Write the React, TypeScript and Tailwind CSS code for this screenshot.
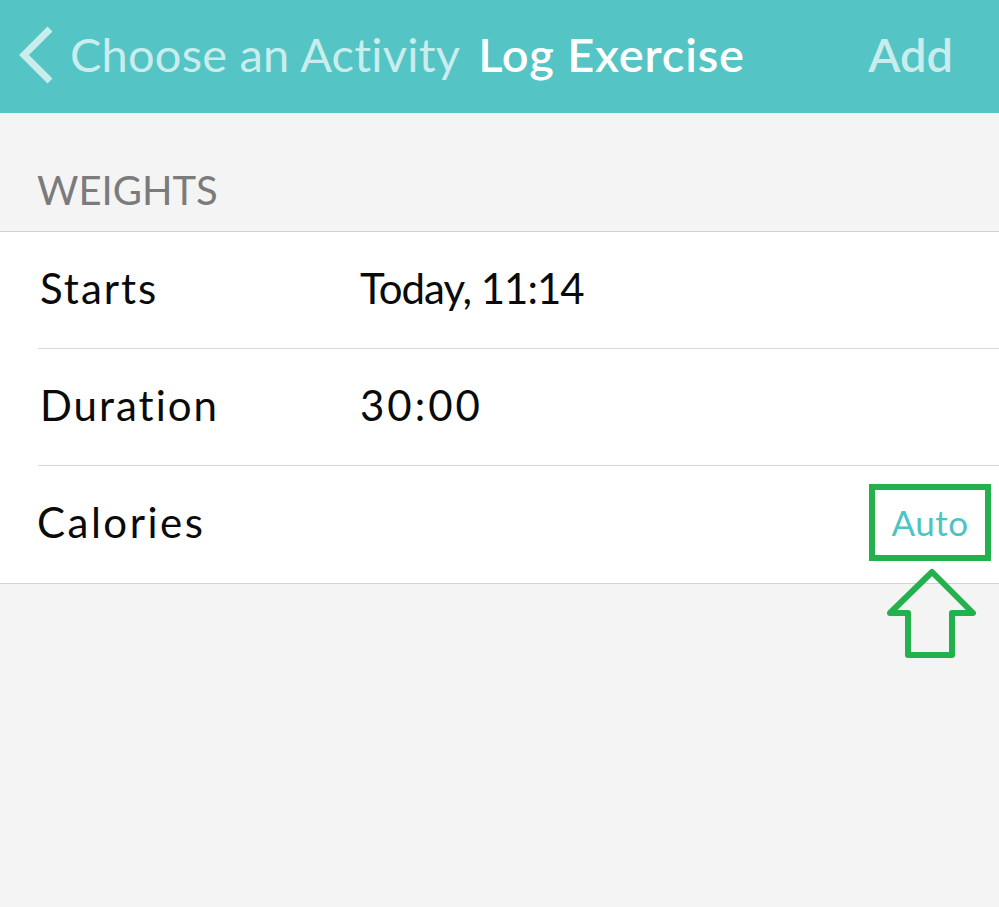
import React from 'react';

const rows = [
  { label: 'Starts', value: 'Today, 11:14', track: 'tracking-[-1px]' },
  { label: 'Duration', value: '30:00', track: 'tracking-[3px]' },
];

export default function App() {
  return (
    <div className="relative w-[999px] h-[907px] bg-[#f4f4f4] font-['Lato',sans-serif] overflow-hidden">
      {/* Nav bar */}
      <div className="h-[113px] bg-[#54c4c5] flex items-center">
        <svg width="40" height="60" viewBox="0 0 40 60" className="ml-[16px] mr-[14px] -mt-[4px]">
          <path d="M34 4 L8 30 L34 56" fill="none" stroke="#c9eded" strokeWidth="7" />
        </svg>
        <span className="text-[47px] text-[#c9eded] tracking-[0.2px] -mt-[4px]">Choose an Activity</span>
        <span className="text-[47px] text-white font-semibold tracking-[0.8px] ml-[18px] -mt-[4px]">Log Exercise</span>
        <span className="text-[47px] text-[#c9eded] font-semibold ml-auto mr-[46px] -mt-[4px]">Add</span>
      </div>

      {/* Section title */}
      <div className="h-[118px] flex items-end pl-[37px] pb-[21px]">
        <span className="text-[40px] text-[#7b7b7b] leading-none">WEIGHTS</span>
      </div>

      {/* Rows */}
      <div className="bg-white border-y border-[#d2d2d2]">
        {rows.map((r) => (
          <div key={r.label} className="pl-[38px]">
            <div className="h-[117px] flex items-center border-b border-[#d8d8d8] pb-[4px]">
              <span className="w-[322px] pl-[2px] text-[42px] text-[#0a0a0a] tracking-[2px]">{r.label}</span>
              <span className={`text-[42px] text-[#0a0a0a] ${r.track}`}>{r.value}</span>
            </div>
          </div>
        ))}
        <div className="h-[117px] flex items-center pl-[37px] pr-[8px]">
          <span className="text-[42px] text-[#0a0a0a] tracking-[2.5px] pb-[4px]">Calories</span>
          <div className="ml-auto w-[122px] h-[77px] -mt-[4px] border-[6px] border-[#22b14c] flex items-center justify-center">
            <span className="text-[35px] text-[#4fc3c3] tracking-[0.5px]">Auto</span>
          </div>
        </div>
      </div>

      {/* Arrow annotation pointing at Auto */}
      <svg
        width="95"
        height="95"
        viewBox="0 0 95 95"
        className="absolute left-[885px] top-[567px]"
      >
        <path
          d="M47 5 L88 46 L67 46 L67 88 L23 88 L23 46 L5 46 Z"
          fill="none"
          stroke="#22b14c"
          strokeWidth="6"
          strokeLinejoin="round"
        />
      </svg>
    </div>
  );
}
